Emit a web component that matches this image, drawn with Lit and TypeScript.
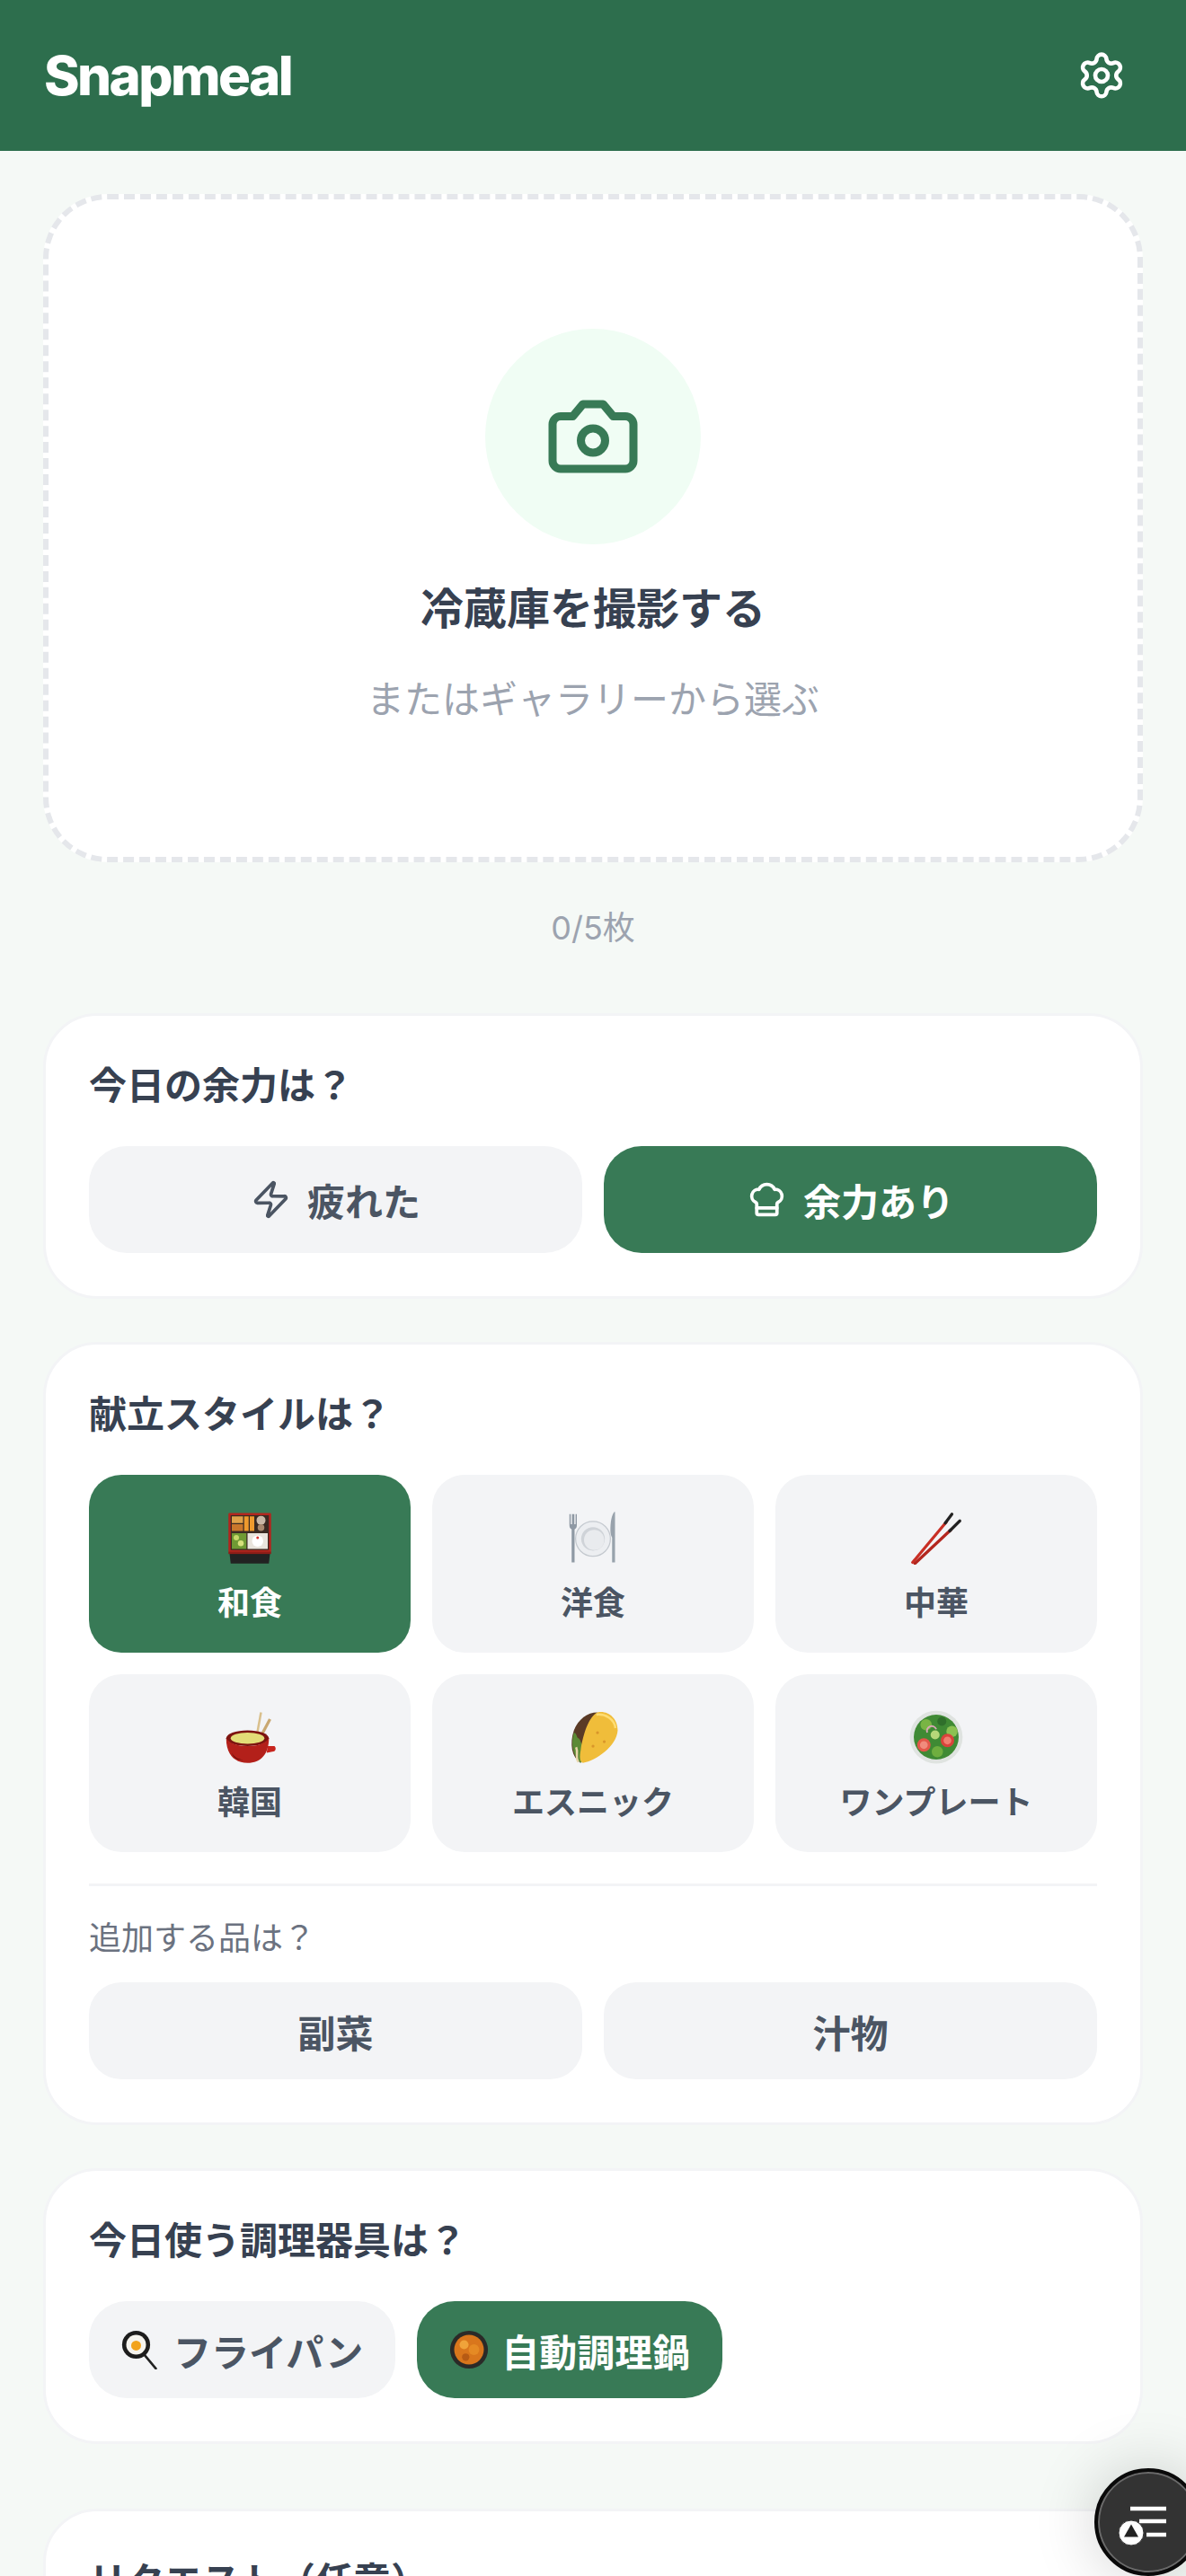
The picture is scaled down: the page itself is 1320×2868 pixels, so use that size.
import { LitElement, html, css, svg } from "lit";
import { customElement } from "lit/decorators.js";

const emoji = {
  bento: svg`<rect x="5" y="2" width="38" height="35" rx="1" fill="#b3261e"/><rect x="7" y="4" width="34" height="31" fill="#3a2a22"/>
    <rect x="8" y="5" width="10" height="6" fill="#e0a24a"/><rect x="8" y="12" width="10" height="6" fill="#c9772c"/><rect x="19" y="5" width="4" height="13" fill="#ef9a2d"/><rect x="24" y="5" width="4" height="13" fill="#ef9a2d"/><circle cx="34" cy="8.500" r="4" fill="#c9b7a6"/><circle cx="34" cy="15" r="3" fill="#a8886e"/>
    <rect x="8" y="20" width="13" height="14" fill="#6f9a34"/><circle cx="12" cy="24" r="2.400" fill="#c7d86a"/><circle cx="16" cy="29" r="2.600" fill="#d7e07c"/><rect x="22" y="20" width="18" height="14" fill="#e9e4dc"/><circle cx="31" cy="27" r="5" fill="#fff"/><circle cx="31" cy="24" r="1.200" fill="#d8342b"/>
    <path d="M6 38h36l-1 9H7z" fill="#222"/><rect x="5" y="36.500" width="38" height="2" fill="#8f1d17"/>`,
  plate: svg`<circle cx="24" cy="25" r="15.500" fill="#eceef1" stroke="#c4c9cf" stroke-width="1"/><circle cx="24" cy="25" r="10.500" fill="#cfd3d8"/><circle cx="25" cy="26" r="9" fill="#e9ebee"/>
    <path d="M3 3v10c0 2 1 3 2 3.500V46h2.600V16.500c1-.5 2-1.500 2-3.500V3H8.500v9H7.400V3H5.300v9H4.200V3z" fill="#8f99a4"/><path d="M43 1c-2.500 3-3.500 9-3.500 17 0 3 1 5 1.500 6v22h2.600V1z" fill="#98a2ac"/>`,
  sticks: svg`<path d="M3 46 33 10" stroke="#c92f25" stroke-width="2.600" stroke-linecap="round"/><path d="M5 47 37 17" stroke="#b3261e" stroke-width="2.600" stroke-linecap="round"/><path d="M32 11 38 3" stroke="#222" stroke-width="2.600" stroke-linecap="round"/><path d="M36 18 45 9" stroke="#222" stroke-width="2.600" stroke-linecap="round"/>`,
  pot: svg`<path d="M30 24 34 2" stroke="#d9c08c" stroke-width="2"/><path d="M33 25 42 8" stroke="#c9a872" stroke-width="2.600"/><ellipse cx="22" cy="25" rx="19" ry="7" fill="#7d1410"/><path d="M3 25c0 14 7 22 19 22s19-8 19-22c-3 5-11 7-19 7S6 30 3 25z" fill="#b3201a"/><ellipse cx="22" cy="25" rx="15" ry="5" fill="#e3dd77"/><path d="M40 32h6c2 2 1 5-2 5l-5 1z" fill="#c7241d"/><path d="M8 38c2 4 6 6 10 6-5 1-9-2-10-6z" fill="#5b0d0a"/>`,
  taco: svg`<path d="M13 47C5 42 3 30 7 18 11 8 19 2 28 2c-6 7-10 24-15 45z" fill="#5a3a26"/><path d="M13 47C6 41 4 30 7 20c3 1 2 4 4 5s2 5 4 6-1 6 1 8-2 6-3 8z" fill="#5c8a35"/><path d="M11 46c-3-3 0-8-2-13" stroke="#e8d6a8" stroke-width="2" fill="none"/><path d="M15 47C27 45 45 32 46 18 46 7 37 0 28 2 20 6 15 22 13 36c-1 5-1 10 2 11z" fill="#f0bd3a"/><path d="M27 4c8-1 16 4 17 12" stroke="#ffdd73" stroke-width="2" fill="none"/><circle cx="28" cy="20" r="1.300" fill="#d9962a"/><circle cx="34" cy="28" r="1.300" fill="#d9962a"/><circle cx="24" cy="32" r="1.300" fill="#d9962a"/>`,
  salad: svg`<circle cx="24" cy="24" r="23.500" fill="#dfe3e0"/><circle cx="24" cy="24" r="20" fill="#3f8a34"/><circle cx="15" cy="13" r="5" fill="#79b544"/><circle cx="29" cy="10" r="4" fill="#2f6f2b"/><circle cx="38" cy="19" r="5" fill="#8cc152"/><circle cx="13" cy="31" r="6" fill="#e2574a"/><circle cx="13" cy="31" r="3.500" fill="#f08b7d"/><circle cx="34" cy="27" r="6" fill="#d9433b"/><circle cx="34" cy="27" r="3.500" fill="#ef7f6f"/><circle cx="23" cy="22" r="4" fill="#b6d779"/><circle cx="25" cy="37" r="5" fill="#6fae3f"/><path d="M16 20a4 4 0 0 1 8-3" stroke="#d9a8b8" stroke-width="1.500" fill="none"/>`,
  pan: svg`<path d="M27 29 42 47" stroke="#222" stroke-width="2.800" stroke-linecap="round"/><circle cx="18" cy="18" r="17" fill="#1d1d1d"/><circle cx="18" cy="18" r="12" fill="#f6f4ee"/><circle cx="18" cy="19" r="6" fill="#f2a31b"/>`,
  stew: svg`<circle cx="24" cy="24" r="23" fill="#2b2a28"/><circle cx="24" cy="24" r="18" fill="#d9761c"/><circle cx="18" cy="18" r="5.500" fill="#f0a33a"/><circle cx="30" cy="24" r="6.500" fill="#e58a24"/><circle cx="20" cy="33" r="4.500" fill="#b65a14"/>`,
};

const icon = (body: unknown) => svg`<svg xmlns="http://www.w3.org/2000/svg" viewBox="0 0 24 24" fill="none" stroke="currentColor" stroke-width="2" stroke-linecap="round" stroke-linejoin="round">${body}</svg>`;
const emojiSvg = (body: unknown) => svg`<svg xmlns="http://www.w3.org/2000/svg" viewBox="0 0 48 48">${body}</svg>`;

const styleTiles = [
  { e: emoji.bento, label: "和食", on: true },
  { e: emoji.plate, label: "洋食", on: false },
  { e: emoji.sticks, label: "中華", on: false },
  { e: emoji.pot, label: "韓国", on: false },
  { e: emoji.taco, label: "エスニック", on: false },
  { e: emoji.salad, label: "ワンプレート", on: false },
];

@customElement("app-root")
export class AppRoot extends LitElement {
  static styles = css`
    :host {
      display: block;
      position: relative;
      height: 2868px;
      overflow: hidden;
      background: #f5f9f6;
      font-family: Inter, "Noto Sans CJK JP", sans-serif;
      color: #374151;
    }
    .header {
      height: 168px;
      background: #2d6e4d;
      display: flex;
      align-items: center;
      justify-content: space-between;
      padding: 0 66px 0 49px;
      box-sizing: border-box;
      color: #fff;
    }
    .brand { font-size: 60px; font-weight: 800; letter-spacing: -2.6px; line-height: 1; }
    .gear { width: 56px; height: 56px; display: block; }
    .gear svg { display: block; width: 100%; height: 100%; }
    .main { padding: 48px; display: flex; flex-direction: column; }
    .upload {
      height: 744px;
      box-sizing: border-box;
      background: #fff;
      border: 6px dashed #e5e7eb;
      border-radius: 72px;
      display: flex;
      flex-direction: column;
      align-items: center;
      padding-top: 144px;
    }
    .cam {
      width: 240px; height: 240px; border-radius: 50%;
      background: #f0fdf4; color: #387a56;
      display: flex; align-items: center; justify-content: center;
    }
    .cam svg { width: 108px; height: 108px; }
    .up-title { margin-top: 39px; font-size: 48px; font-weight: 700; line-height: 66px; }
    .up-sub { margin-top: 38px; font-size: 42px; line-height: 60px; color: #9ca3af; }
    .count { margin: 49px 0 71px; text-align: center; font-size: 36px; line-height: 48px; color: #9ca3af; }
    .card {
      background: #fff;
      border: 3px solid #f3f4f6;
      border-radius: 60px;
      padding: 48px;
      margin-bottom: 48px;
    }
    .card.tools { margin-bottom: 72px; }
    .title { font-size: 42px; font-weight: 700; line-height: 60px; margin-bottom: 37px; }
    .two { display: grid; grid-template-columns: 1fr 1fr; gap: 24px; }
    .btn {
      background: #f3f4f6; color: #4b5563;
      display: flex; align-items: center; justify-content: center; gap: 18px;
      font-weight: 700; font-size: 42px; border-radius: 42px;
    }
    .btn.on { background: #387a56; color: #fff; }
    .energy { height: 119px; }
    .energy svg { width: 45px; height: 45px; display: block; }
    .side { height: 108px; border-radius: 36px; }
    .tiles { display: grid; grid-template-columns: repeat(3, 1fr); gap: 24px; }
    .tile {
      height: 198px; border-radius: 36px;
      background: #f3f4f6; color: #4b5563;
      display: flex; flex-direction: column; align-items: center;
      padding-top: 40px; box-sizing: border-box;
      font-size: 36px; font-weight: 700; line-height: 50px;
    }
    .tile.on { background: #387a56; color: #fff; }
    .tile svg { width: 60px; height: 60px; display: block; margin-bottom: 18px; }
    .rule { height: 3px; background: #f3f4f6; margin: 35px 0 31px; }
    .subtitle { font-size: 36px; line-height: 54px; color: #6b7280; margin-bottom: 22px; }
    .chips { display: flex; gap: 24px; }
    .chip {
      height: 108px; padding: 0 36px; border-radius: 42px;
      display: flex; align-items: center; gap: 14px;
      background: #f3f4f6; color: #4b5563;
      font-size: 42px; font-weight: 700;
    }
    .chip.on { background: #387a56; color: #fff; }
    .chip svg { width: 44px; height: 44px; display: block; }
    .fab {
      position: absolute; left: 1218px; top: 2748px;
      width: 120px; height: 120px; box-sizing: border-box;
      border-radius: 50%;
      background: #333;
      border: 4px solid #0a0a0a;
      box-shadow: inset 0 0 0 2px #6a6a6a, 0 0 70px rgba(0, 0, 0, 0.18);
    }
    .fab svg { position: absolute; left: 0; top: 0; width: 120px; height: 120px; display: block; overflow: visible; }
  `;

  render() {
    return html`
      <div class="header">
        <div class="brand">Snapmeal</div>
        <div class="gear">${icon(svg`<path d="M9.671 4.136a2.34 2.34 0 0 1 4.659 0 2.34 2.34 0 0 0 3.319 1.915 2.34 2.34 0 0 1 2.33 4.033 2.34 2.34 0 0 0 0 3.831 2.34 2.34 0 0 1-2.33 4.033 2.34 2.34 0 0 0-3.319 1.915 2.34 2.34 0 0 1-4.659 0 2.34 2.34 0 0 0-3.318-1.915 2.34 2.34 0 0 1-2.331-4.033 2.34 2.34 0 0 0 0-3.831A2.34 2.34 0 0 1 6.35 6.051a2.34 2.34 0 0 0 3.319-1.915"/><circle cx="12" cy="12" r="3"/>`)}</div>
      </div>
      <div class="main">
        <div class="upload">
          <div class="cam">${icon(svg`<path d="M14.5 4h-5L7 7H4a2 2 0 0 0-2 2v9a2 2 0 0 0 2 2h16a2 2 0 0 0 2-2V9a2 2 0 0 0-2-2h-3l-2.500-3z"/><circle cx="12" cy="13" r="3"/>`)}</div>
          <div class="up-title">冷蔵庫を撮影する</div>
          <div class="up-sub">またはギャラリーから選ぶ</div>
        </div>
        <div class="count">0/5枚</div>

        <div class="card">
          <div class="title">今日の余力は？</div>
          <div class="two">
            <div class="btn energy">${icon(svg`<path d="M4 14a1 1 0 0 1-.78-1.63l9.900-10.200a.5.5 0 0 1 .86.46l-1.920 6.020A1 1 0 0 0 13 10h7a1 1 0 0 1 .78 1.630l-9.900 10.200a.5.5 0 0 1-.86-.46l1.920-6.020A1 1 0 0 0 11 14z"/>`)}<span>疲れた</span></div>
            <div class="btn energy on">${icon(svg`<path d="M17 21a1 1 0 0 0 1-1v-5.350c0-.457.316-.844.727-1.041a4 4 0 0 0-2.134-7.589 5 5 0 0 0-9.186 0 4 4 0 0 0-2.134 7.588c.411.198.727.585.727 1.041V20a1 1 0 0 0 1 1Z"/><path d="M6 17h12"/>`)}<span>余力あり</span></div>
          </div>
        </div>

        <div class="card">
          <div class="title">献立スタイルは？</div>
          <div class="tiles">
            ${styleTiles.map(
              (t) => html`<div class="tile ${t.on ? "on" : ""}">${emojiSvg(t.e)}<span>${t.label}</span></div>`
            )}
          </div>
          <div class="rule"></div>
          <div class="subtitle">追加する品は？</div>
          <div class="two">
            <div class="btn side">副菜</div>
            <div class="btn side">汁物</div>
          </div>
        </div>

        <div class="card tools">
          <div class="title">今日使う調理器具は？</div>
          <div class="chips">
            <div class="chip">${emojiSvg(emoji.pan)}<span>フライパン</span></div>
            <div class="chip on">${emojiSvg(emoji.stew)}<span>自動調理鍋</span></div>
          </div>
        </div>

        <div class="card">
          <div class="title">リクエスト（任意）</div>
        </div>
      </div>
      <div class="fab">
        <svg viewBox="0 0 120 120" xmlns="http://www.w3.org/2000/svg">
          <g transform="translate(-4 -4)">
            <path d="M40 45h40M50 59h30M58 74h22" stroke="#fff" stroke-width="4.500" fill="none"/>
            <circle cx="41" cy="72" r="14" fill="#fff" stroke="#333" stroke-width="1"/>
            <path d="M41 62.500l8 14h-16z" fill="#222"/>
          </g>
        </svg>
      </div>
    `;
  }
}
